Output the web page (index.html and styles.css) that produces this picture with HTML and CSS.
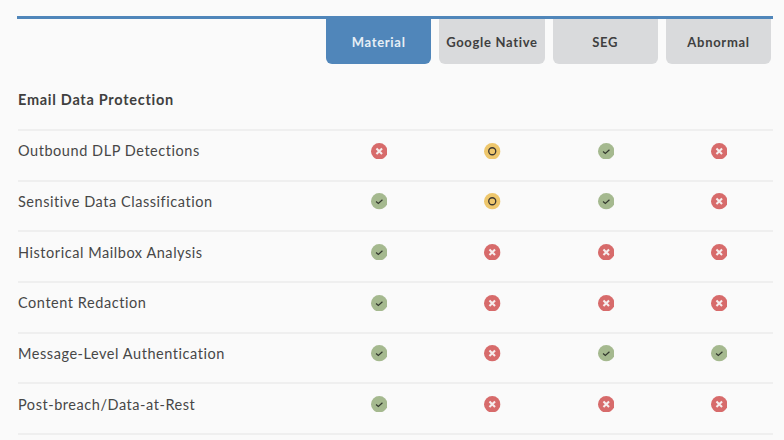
FILE: index.html
```html
<!DOCTYPE html>
<html lang="en">
<head>
<meta charset="utf-8">
<title>Email Data Protection comparison</title>
<link rel="stylesheet" href="styles.css">
</head>
<body>
<svg class="defs" width="0" height="0" aria-hidden="true">
  <symbol id="no" viewBox="0 0 16 16"><circle cx="8" cy="8" r="8" fill="#d76b6b"/><path d="M5.3 5.3l5.4 5.4M10.7 5.3l-5.4 5.4" stroke="#f6eeee" stroke-width="2" fill="none"/></symbol>
  <symbol id="yes" viewBox="0 0 16 16"><circle cx="8" cy="8" r="8" fill="#a5b98f"/><path d="M4.9 8.2l2.2 1.9 4-3.6" stroke="#33392f" stroke-width="1.2" fill="none"/></symbol>
  <symbol id="part" viewBox="0 0 16 16"><circle cx="8" cy="8" r="8" fill="#eec76d"/><circle cx="8" cy="8" r="3.4" stroke="#3a3631" stroke-width="1.3" fill="none"/></symbol>
</svg>
<main class="table">
  <div class="head">
    <div></div>
    <div class="tab tab-active">Material</div>
    <div class="tab">Google Native</div>
    <div class="tab">SEG</div>
    <div class="tab">Abnormal</div>
  </div>
  <h2 class="section">Email Data Protection</h2>
  <div class="row"><div class="label">Outbound DLP Detections</div><div class="cell"><svg class="ic"><use href="#no"/></svg></div><div class="cell"><svg class="ic"><use href="#part"/></svg></div><div class="cell"><svg class="ic"><use href="#yes"/></svg></div><div class="cell"><svg class="ic"><use href="#no"/></svg></div></div>
  <div class="row"><div class="label">Sensitive Data Classification</div><div class="cell"><svg class="ic"><use href="#yes"/></svg></div><div class="cell"><svg class="ic"><use href="#part"/></svg></div><div class="cell"><svg class="ic"><use href="#yes"/></svg></div><div class="cell"><svg class="ic"><use href="#no"/></svg></div></div>
  <div class="row"><div class="label">Historical Mailbox Analysis</div><div class="cell"><svg class="ic"><use href="#yes"/></svg></div><div class="cell"><svg class="ic"><use href="#no"/></svg></div><div class="cell"><svg class="ic"><use href="#no"/></svg></div><div class="cell"><svg class="ic"><use href="#no"/></svg></div></div>
  <div class="row"><div class="label">Content Redaction</div><div class="cell"><svg class="ic"><use href="#yes"/></svg></div><div class="cell"><svg class="ic"><use href="#no"/></svg></div><div class="cell"><svg class="ic"><use href="#no"/></svg></div><div class="cell"><svg class="ic"><use href="#no"/></svg></div></div>
  <div class="row"><div class="label">Message-Level Authentication</div><div class="cell"><svg class="ic"><use href="#yes"/></svg></div><div class="cell"><svg class="ic"><use href="#no"/></svg></div><div class="cell"><svg class="ic"><use href="#yes"/></svg></div><div class="cell"><svg class="ic"><use href="#yes"/></svg></div></div>
  <div class="row"><div class="label">Post-breach/Data-at-Rest</div><div class="cell"><svg class="ic"><use href="#yes"/></svg></div><div class="cell"><svg class="ic"><use href="#no"/></svg></div><div class="cell"><svg class="ic"><use href="#no"/></svg></div><div class="cell"><svg class="ic"><use href="#no"/></svg></div></div>
</main>
</body>
</html>
```
FILE: styles.css
```css
html, body {
  margin: 0;
  height: 440px;
  overflow: hidden;
  background: #fafafa;
}
body {
  font-family: "Lato", "Liberation Sans", sans-serif;
  color: #474747;
  padding: 16px 11px 0 17px;
  box-sizing: border-box;
}
.defs {
  position: absolute;
}
.table {
  width: 756px;
}
.head {
  display: grid;
  grid-template-columns: 301px repeat(4, 105.3px);
  column-gap: 8px;
  border-top: 3px solid #5086ba;
}
.tab {
  height: 45px;
  display: flex;
  align-items: center;
  justify-content: center;
  border-radius: 0 0 6px 6px;
  background: #d9dadc;
  color: #3f3f40;
  font-size: 13px;
  font-weight: 700;
  letter-spacing: 0.7px;
}
.tab-active {
  background: #5086ba;
  color: #e6eef5;
}
.section {
  margin: 0 0 0 1px;
  height: 56px;
  display: flex;
  align-items: center;
  font-size: 14.5px;
  font-weight: 700;
  letter-spacing: 0.72px;
  color: #3f3f40;
  padding: 7px 0 2px;
}
.row {
  display: grid;
  grid-template-columns: 300px repeat(4, 105.3px);
  column-gap: 8px;
  align-items: center;
  height: 39.67px;
  padding-bottom: 9px;
  margin-left: 1px;
  border-top: 2px solid #efefef;
}
.row:last-child {
  border-bottom: 2px solid #efefef;
}
.label {
  font-size: 14.5px;
  letter-spacing: 0.55px;
}
.cell {
  display: flex;
  justify-content: center;
  padding-left: 1.2px;
}
.ic {
  width: 16.5px;
  height: 16.5px;
  display: block;
}
```
